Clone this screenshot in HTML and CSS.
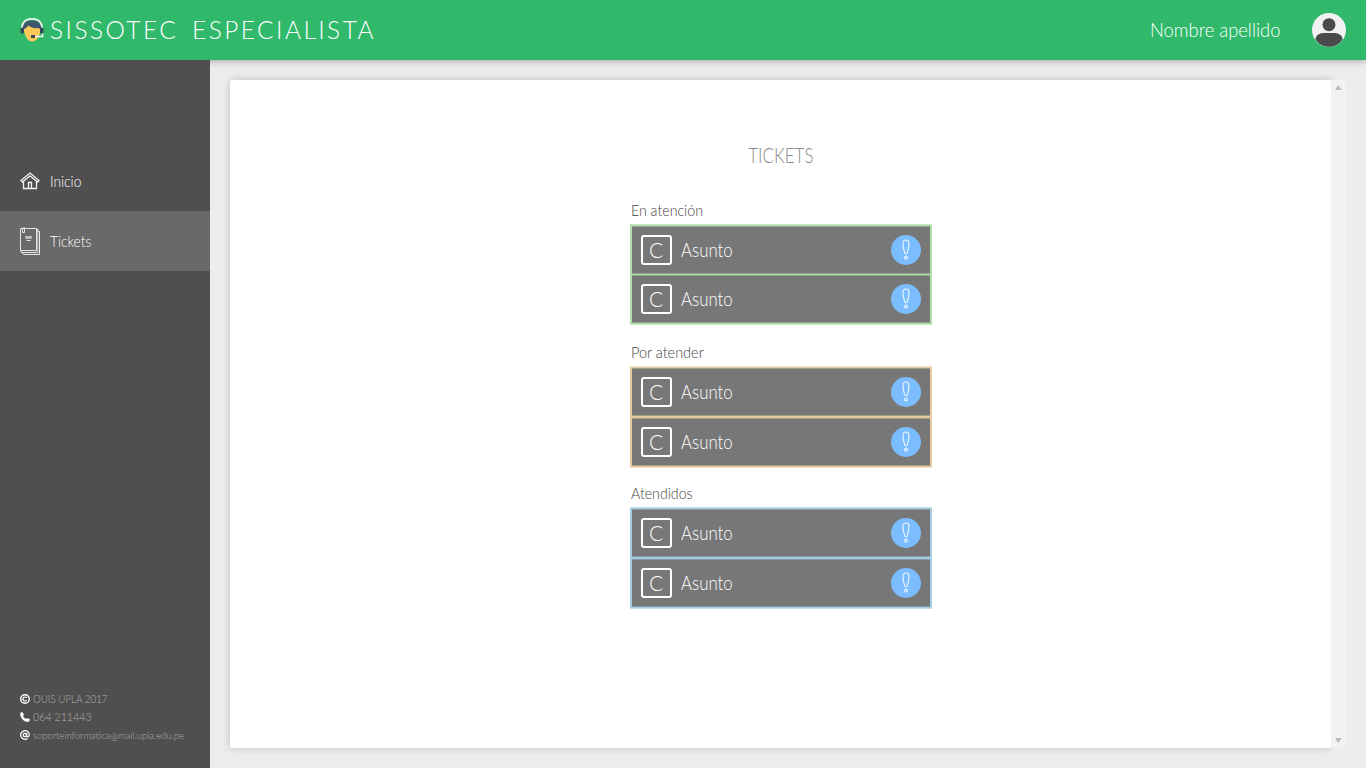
FILE: index.html
```html
<!DOCTYPE html>
<html lang="es">
<head>
<meta charset="utf-8">
<title>Sissotec Especialista</title>
<link rel="stylesheet" href="styles.css">
</head>
<body>
<svg class="defs" width="0" height="0">
  <symbol id="alert" viewBox="0 0 30 30">
    <circle cx="15" cy="15" r="15" fill="#7bbdff"/>
    <path d="M15 5c-1.900 0-3 1.300-3 3.400 0 2.600.9 6.600 1.700 9.200.5 1.500 2.100 1.500 2.600 0C17.100 15 18 11 18 8.400 18 6.300 16.900 5 15 5z" fill="none" stroke="#e8f4ff" stroke-width="1.200"/>
    <circle cx="15" cy="22.500" r="1.400" fill="none" stroke="#e8f4ff" stroke-width="1.200"/>
  </symbol>
</svg>
<header class="topbar">
  <svg class="logo" viewBox="0 0 24 24">
    <path d="M3.500 8C4 17 7 23.500 12.200 23.500S20.500 17 21 8L12 5z" fill="#fdc958"/>
    <path d="M2.500 11C2 5 7 2.500 12 2.500s10 2.500 9.500 8.500c-1.500 0-2.500-.5-3-1-4 1-8-.5-10-2.500C7.500 9 6 10 4.500 11z" fill="#3f556b"/>
    <path d="M1.800 10C2.200 4 6 .9 12 .9s9.800 3.100 10.200 9.100" fill="none" stroke="#e8f7ee" stroke-width="1.600"/>
    <rect x=".5" y="9.500" width="3.500" height="6" rx="1.500" fill="#33475c"/>
    <rect x="20" y="9.500" width="3.500" height="6" rx="1.500" fill="#33475c"/>
    <path d="M22.600 15.500v3H14" fill="none" stroke="#f0f7f3" stroke-width="1.600"/>
    <rect x="11" y="17" width="4" height="3" fill="#3f4a57"/>
  </svg>
  <h1 class="brand">SISSOTEC ESPECIALISTA</h1>
  <span class="user">Nombre apellido</span>
  <svg class="avatar" viewBox="0 0 34 34">
    <circle cx="17" cy="17" r="17" fill="#f1f1f1"/>
    <circle cx="17" cy="11.700" r="6.500" fill="#4a4a4a"/>
    <path d="M3.500 26.500C3.500 21.500 8 20 13 20h8c5 0 9.500 1.500 9.500 6.500C27.500 31 23 33.800 17 33.800S6.500 31 3.500 26.500z" fill="#4a4a4a"/>
  </svg>
</header>
<div class="layout">
  <aside class="sidebar">
    <nav class="menu">
      <a class="item">
        <svg class="home" viewBox="0 0 20 18" fill="none" stroke="#f2f2f2" stroke-width="1.300">
          <path d="M1 8.500 10 1l9 7.500-1.400 1.600L10 3.800 2.400 10.100z"/>
          <path d="M3.500 9.500v7h13v-7M8.500 16.500v-6h3v6"/>
        </svg>
        <span class="t-home">Inicio</span>
      </a>
      <a class="item active">
        <svg class="book" viewBox="0 0 20 28" fill="none" stroke="#e6e6e6">
          <path d="M17.500 3v20.500l1 2" stroke="#aaa" stroke-width="2"/>
          <path d="M16.500 2.500h1.500v2h1.500v23H3.500L.5 24"/>
          <path d="M.5 1.500h16v22H.500zM1.500 25.500h16"/>
          <path d="M2.500 1v4.500h2V.5h-1"/>
          <path d="M5 9.500h7M5 10.500h7M5.500 11.500h6" stroke="#bbb"/>
          <path d="M6.500 13.500h4"/>
        </svg>
        <span class="t-tickets">Tickets</span>
      </a>
    </nav>
    <footer class="contact">
      <div class="line">
        <svg viewBox="0 0 10 10" fill="none" stroke="#fff"><circle cx="5" cy="5" r="4.300" stroke-width="1.400"/><path d="M6.700 4A2 2 0 1 0 6.700 6" stroke-width="1.200"/></svg>
        <span class="c1">OUIS UPLA 2017</span>
      </div>
      <div class="line">
        <svg viewBox="0 0 10 10"><path d="M.3 1 2.300 0 4 2.800 2.900 4c.7 1.300 1.700 2.300 3 3l1.200-1.100L10 7.600l-.9 2C5 10.800-.4 6 .3 1z" fill="#fff"/></svg>
        <span class="c2">064 211443</span>
      </div>
      <div class="line">
        <svg viewBox="0 0 10 10" fill="none" stroke="#fff" stroke-width="1.200"><circle cx="4.900" cy="5" r="1.700"/><path d="M6.700 3v3c0 1.200 2.600 1.300 2.600-1.200A4.300 4.300 0 1 0 7.500 8.500"/></svg>
        <span class="c3">soporteinformatica@mail.upla.edu.pe</span>
      </div>
    </footer>
  </aside>
  <main class="content">
    <section class="page">
      <h2 class="title">TICKETS</h2>
      <h3 class="label l1"><span>En atención</span></h3>
      <div class="group green">
        <div class="ticket"><span class="box">C</span><span class="subject">Asunto</span><svg class="alert"><use href="#alert"/></svg></div>
        <div class="ticket"><span class="box">C</span><span class="subject">Asunto</span><svg class="alert"><use href="#alert"/></svg></div>
      </div>
      <h3 class="label l2"><span>Por atender</span></h3>
      <div class="group sand">
        <div class="ticket"><span class="box">C</span><span class="subject">Asunto</span><svg class="alert"><use href="#alert"/></svg></div>
        <div class="ticket"><span class="box">C</span><span class="subject">Asunto</span><svg class="alert"><use href="#alert"/></svg></div>
      </div>
      <h3 class="label l3"><span>Atendidos</span></h3>
      <div class="group blue">
        <div class="ticket"><span class="box">C</span><span class="subject">Asunto</span><svg class="alert"><use href="#alert"/></svg></div>
        <div class="ticket"><span class="box">C</span><span class="subject">Asunto</span><svg class="alert"><use href="#alert"/></svg></div>
      </div>
    </section>
    <div class="scroll"><i class="up"></i><i class="down"></i></div>
  </main>
</div>
</body>
</html>
```

FILE: styles.css
```css
* { box-sizing: border-box; }
body { margin: 0; height: 768px; overflow: hidden; display: flex; flex-direction: column; background: #ededed; font-family: Lato, "Open Sans", sans-serif; font-weight: 300; }
h1, h2, h3 { margin: 0; font-weight: 300; white-space: nowrap; }
span { display: inline-block; white-space: nowrap; transform-origin: left center; }
svg { display: block; flex: none; }
.defs { display: none; }
.topbar { height: 60px; flex: none; display: flex; align-items: center; padding: 0 20px; background: #31b96b; color: #fff; box-shadow: 0 0 8px rgba(0,0,0,.4); z-index: 1; }
.logo { width: 24px; height: 24px; }
.brand { margin-left: 6px; font-size: 26px; line-height: 58px; padding-bottom: 2px; letter-spacing: 2.6px; word-spacing: 5px; transform: scaleX(.942); transform-origin: left center; }
.user { margin-left: auto; width: 142px; margin-right: 20px; font-size: 20px; line-height: 58px; padding-bottom: 2px; transform: scaleX(.918); }
.avatar { width: 34px; height: 34px; }
.layout { flex: 1; display: flex; }
.sidebar { width: 210px; background: #4f4f4f; color: #fff; display: flex; flex-direction: column; justify-content: space-between; padding: 91px 0 24px; z-index: 2; }
.item { height: 60px; display: flex; align-items: center; gap: 10px; padding-left: 20px; font-size: 16px; }
.item span { padding-bottom: 2px; }
.t-home { transform: scaleX(.86); }
.t-tickets { transform: scaleX(.86); }
.active { background: #696969; }
.home { width: 20px; height: 18px; }
.book { width: 20px; height: 28px; }
.contact { padding-left: 20px; color: #b0b0b0; }
.line { height: 18.300px; display: flex; align-items: center; gap: 3px; font-size: 11px; }
.line svg { width: 10px; height: 10px; margin-top: 1px; }
.c1 { transform: scaleX(.89); }
.c2 { transform: scaleX(.97); }
.c3 { font-size: 10px; transform: scaleX(.95); }
.content { flex: 1; padding: 20px; display: flex; }
.page { flex: 1; display: flex; flex-direction: column; align-items: center; padding-top: 60px; border-radius: 2px; background: #fff; box-shadow: 0 0 8px rgba(0,0,0,.2); }
.scroll { position: relative; width: 15px; background: #f2f2f2; border-radius: 0 4px 4px 0; display: flex; flex-direction: column; justify-content: space-between; align-items: flex-start; padding: 5px 4px; }
.up, .down { border: 0 solid transparent; border-width: 0 4px 5px 3px; border-bottom-color: #bdbdbd; }
.down { border-width: 5px 4px 0 3px; border-top-color: #bdbdbd; }
.title { font-size: 21px; line-height: 30px; color: #8a8a8a; transform: translateX(.5px) scaleX(.81); }
.label { width: 300px; font-size: 15px; line-height: 20px; color: #444; }
.label span { transform: scaleX(.945); }
.l1 { margin-top: 30px; }
.l2 { margin-top: 17px; }
.l2 span { transform: scaleX(.965); }
.l3 { margin-top: 15px; }
.group { width: 302px; margin-top: 4px; padding: 1px 2px; border: solid var(--pale); border-width: 1px 0; background: var(--line); display: flex; flex-direction: column; gap: 2px; }
.ticket { height: 48px; display: flex; align-items: center; padding: 0 9px; color: #fff; background: #777; box-shadow: inset 0 1px var(--edge), inset 0 -1px var(--edge); }
.box { width: 31px; height: 30px; border: 2px solid #fff; border-radius: 3px; font-size: 21px; line-height: 25px; text-align: center; }
.subject { margin-left: 9px; font-size: 19px; line-height: 30px; transform: scaleX(.885); }
.alert { width: 30px; height: 30px; margin-left: auto; }
.green { --line: #addfa7; --pale: #c5e8c1; --edge: #8fa68c; gap: 1px; }
.sand { --line: #e3cca2; --pale: #efe2c9; --edge: #a59a85; }
.blue { --line: #a4cde2; --pale: #c4dfec; --edge: #8899a3; }
```
